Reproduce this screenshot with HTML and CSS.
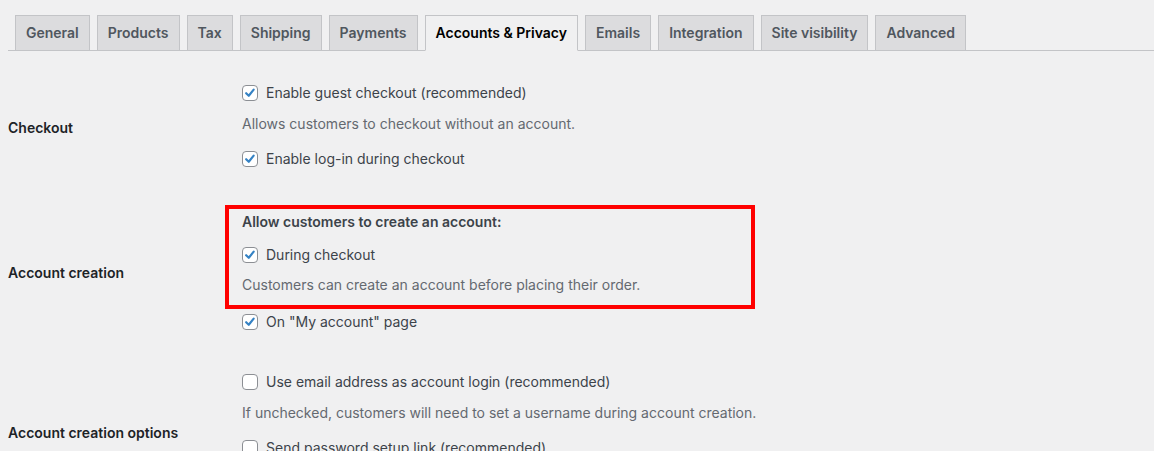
FILE: index.html
```html
<!DOCTYPE html>
<html>
<head>
<meta charset="utf-8">
<link rel="stylesheet" href="styles.css">
</head>
<body>
<div class="wrap">
  <nav class="tabs">
    <a class="tab">General</a>
    <a class="tab">Products</a>
    <a class="tab">Tax</a>
    <a class="tab">Shipping</a>
    <a class="tab">Payments</a>
    <a class="tab active">Accounts &amp; Privacy</a>
    <a class="tab">Emails</a>
    <a class="tab">Integration</a>
    <a class="tab">Site visibility</a>
    <a class="tab">Advanced</a>
  </nav>

  <section class="row first">
    <div class="th">Checkout</div>
    <div class="td">
      <label class="cb"><span class="box checked"></span>Enable guest checkout (recommended)</label>
      <p class="desc">Allows customers to checkout without an account.</p>
      <label class="cb next"><span class="box checked"></span>Enable log-in during checkout</label>
    </div>
  </section>

  <section class="row">
    <div class="th th-shift">Account creation</div>
    <div class="td">
      <div class="highlight">
        <div class="legend">Allow customers to create an account:</div>
        <label class="cb legend-next"><span class="box checked"></span>During checkout</label>
        <p class="desc tight">Customers can create an account before placing their order.</p>
      </div>
      <label class="cb after-hl"><span class="box checked"></span>On "My account" page</label>
    </div>
  </section>

  <section class="row">
    <div class="th">Account creation options</div>
    <div class="td">
      <label class="cb"><span class="box"></span>Use email address as account login (recommended)</label>
      <p class="desc">If unchecked, customers will need to set a username during account creation.</p>
      <label class="cb next"><span class="box"></span>Send password setup link (recommended)</label>
      <p class="desc">New users receive an email to set up their password.</p>
    </div>
  </section>
</div>
</body>
</html>
```

FILE: styles.css
```css
html, body {
  margin: 0;
  padding: 0;
  background: #f0f0f1;
  overflow: hidden;
}
body {
  font-family: Inter, "Noto Sans", "Liberation Sans", sans-serif;
  font-size: 14px;
  color: #3c434a;
}
.wrap {
  padding-left: 8px;
}
.tabs {
  display: flex;
  padding-top: 15px;
  padding-left: 7px;
  border-bottom: 1px solid #c3c4c7;
  margin-bottom: 12px;
}
.tab {
  display: block;
  margin-right: 7px;
  margin-bottom: -1px;
  padding: 5px 10px;
  line-height: 24px;
  font-size: 14px;
  font-weight: 600;
  color: #50575e;
  background: #dcdcde;
  border: 1px solid #c3c4c7;
  white-space: nowrap;
}
.tab.active {
  background: #f0f0f1;
  color: #000;
  border-bottom-color: #f0f0f1;
}
.row {
  display: grid;
  grid-template-columns: 234px 1fr;
  align-items: center;
  padding: 20px 0;
}
.th {
  font-weight: 600;
  color: #1d2327;
  line-height: 20px;
  padding-top: 4px;
}
.th.th-shift {
  padding-top: 5px;
}
.td {
  display: flex;
  flex-direction: column;
  align-items: flex-start;
}
.cb {
  display: flex;
  align-items: center;
  height: 20px;
  line-height: 20px;
  white-space: nowrap;
}
.cb.next {
  margin-top: 15px;
}
.box {
  width: 16px;
  height: 16px;
  box-sizing: border-box;
  border: 1px solid #8c8f94;
  border-radius: 4px;
  background: #fff;
  margin-right: 8px;
  flex: none;
}
.box.checked {
  background: #fff url("data:image/svg+xml;utf8,<svg xmlns='http://www.w3.org/2000/svg' viewBox='0 0 16 16'><path d='M3.6 8.2 L6.6 11.2 L12.2 4.2' fill='none' stroke='%233582c4' stroke-width='2.5' stroke-linecap='round' stroke-linejoin='round'/></svg>") no-repeat center / 14px 14px;
}
.desc {
  margin: 11px 0 0;
  line-height: 20px;
  color: #646970;
  white-space: nowrap;
}
.desc.tight {
  margin-top: 10px;
}
.highlight {
  outline: 4px solid #ff0000;
  margin-left: -13px;
  padding: 3px 0 10px 13px;
  width: 509px;
}
.legend {
  font-weight: 600;
  line-height: 20px;
  color: #3c434a;
}
.legend-next {
  margin-top: 13px;
}
.after-hl {
  margin-top: 7px;
}
```
